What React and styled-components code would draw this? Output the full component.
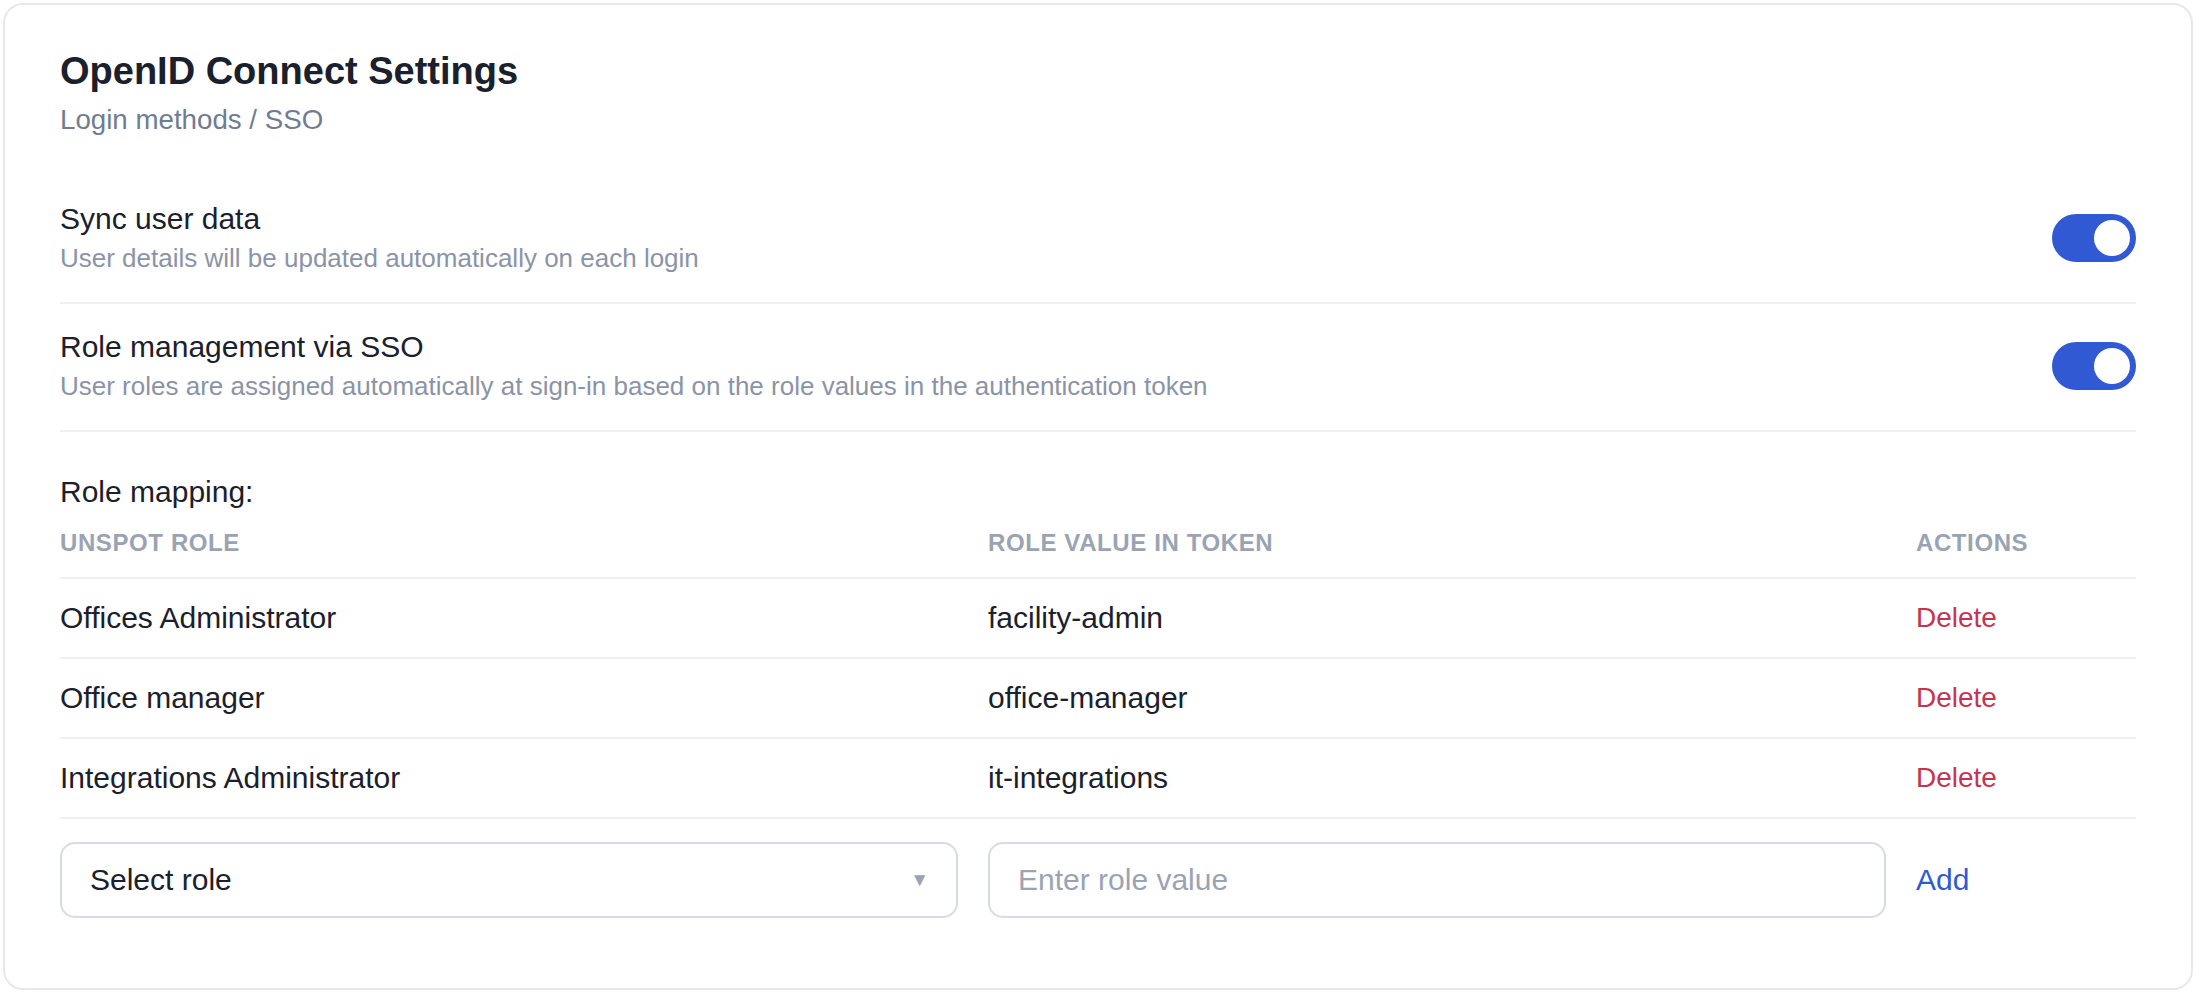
import React, { useState } from 'react';
import styled, { createGlobalStyle } from 'styled-components';

const TextColor = '#1a202c';
const MutedColor = '#6f7c91';
const SoftColor = '#8a94a7';
const HeadColor = '#9aa3b3';
const LineColor = '#eef0f4';
const BorderColor = '#d6dbe4';
const BlueColor = '#3059d3';
const RedColor = '#c8334f';

const GlobalStyle = createGlobalStyle`
  html, body {
    margin: 0;
    padding: 0;
    background: #ffffff;
    font-family: "Liberation Sans", Arial, sans-serif;
    color: ${TextColor};
  }
  * {
    box-sizing: border-box;
  }
`;

const Page = styled.div`
  padding: 3px;
`;

const Card = styled.section`
  border: 2px solid #e5e8ee;
  border-radius: 20px;
  background: #ffffff;
  padding: 44px 55px 70px;
`;

const Title = styled.h1`
  margin: 0;
  font-size: 38px;
  line-height: 44px;
  font-weight: 700;
  color: ${TextColor};
`;

const Subtitle = styled.div`
  margin-top: 11px;
  font-size: 27.7px;
  line-height: 32px;
  color: ${MutedColor};
`;

const Settings = styled.div`
  margin-top: 40px;
`;

const SettingRow = styled.div`
  display: flex;
  align-items: center;
  justify-content: space-between;
  padding: 25px 0 28px;
  border-bottom: 2px solid ${LineColor};
`;

const SettingText = styled.div`
  display: flex;
  flex-direction: column;
  gap: 5px;
`;

const Label = styled.div`
  font-size: 30px;
  line-height: 36px;
  color: ${TextColor};
`;

const Hint = styled.div`
  font-size: 26px;
  line-height: 32px;
  color: ${SoftColor};
`;

const Switch = styled.button`
  position: relative;
  width: 84px;
  height: 48px;
  padding: 0;
  border: none;
  border-radius: 24px;
  cursor: pointer;
  flex-shrink: 0;
  background: ${({ $on }) => ($on ? BlueColor : '#cbd2dc')};

  &::after {
    content: '';
    position: absolute;
    top: 6px;
    left: ${({ $on }) => ($on ? '42px' : '6px')};
    width: 36px;
    height: 36px;
    border-radius: 50%;
    background: #ffffff;
  }
`;

const MappingTitle = styled.div`
  margin-top: 42px;
  font-size: 30px;
  line-height: 36px;
  color: ${TextColor};
`;

const Grid = styled.div`
  display: grid;
  grid-template-columns: 1fr 1fr 220px;
  column-gap: 30px;
  align-items: center;
  border-bottom: 2px solid ${LineColor};
  padding: ${({ $head }) => ($head ? '19px 0 20px' : '21px 0')};
`;

const HeadCell = styled.div`
  font-size: 24px;
  line-height: 28px;
  font-weight: 700;
  letter-spacing: 0.6px;
  text-transform: uppercase;
  color: ${HeadColor};
`;

const Cell = styled.div`
  font-size: 30px;
  line-height: 36px;
  color: ${TextColor};
`;

const LinkButton = styled.button`
  justify-self: start;
  padding: 0;
  border: none;
  background: none;
  cursor: pointer;
  font-family: inherit;
  font-size: ${({ $danger }) => ($danger ? '28px' : '30px')};
  line-height: 36px;
  color: ${({ $danger }) => ($danger ? RedColor : BlueColor)};
`;

const AddRow = styled.div`
  display: grid;
  grid-template-columns: 1fr 1fr 220px;
  column-gap: 30px;
  align-items: center;
  margin-top: 23px;
`;

const SelectBox = styled.div`
  display: flex;
  align-items: center;
  justify-content: space-between;
  height: 76px;
  padding: 0 27px 0 28px;
  border: 2px solid ${BorderColor};
  border-radius: 15px;
  font-size: 30px;
  color: ${TextColor};
  cursor: pointer;
`;

const Caret = styled.span`
  font-size: 19px;
  color: ${HeadColor};
`;

const TextInput = styled.input`
  height: 76px;
  width: 100%;
  padding: 0 28px;
  border: 2px solid ${BorderColor};
  border-radius: 15px;
  font-family: inherit;
  font-size: 30px;
  color: ${TextColor};
  outline: none;

  &::placeholder {
    color: ${HeadColor};
  }
`;

const initialRoles = [
  { role: 'Offices Administrator', value: 'facility-admin' },
  { role: 'Office manager', value: 'office-manager' },
  { role: 'Integrations Administrator', value: 'it-integrations' },
];

export default function App() {
  const [sync, setSync] = useState(true);
  const [roleSso, setRoleSso] = useState(true);
  const [roles, setRoles] = useState(initialRoles);
  const [value, setValue] = useState('');

  return (
    <Page>
      <GlobalStyle />
      <Card>
        <Title>OpenID Connect Settings</Title>
        <Subtitle>Login methods / SSO</Subtitle>

        <Settings>
          <SettingRow>
            <SettingText>
              <Label>Sync user data</Label>
              <Hint>User details will be updated automatically on each login</Hint>
            </SettingText>
            <Switch $on={sync} onClick={() => setSync(!sync)} aria-label="Sync user data" />
          </SettingRow>
          <SettingRow>
            <SettingText>
              <Label>Role management via SSO</Label>
              <Hint>
                User roles are assigned automatically at sign-in based on the role values in the authentication token
              </Hint>
            </SettingText>
            <Switch $on={roleSso} onClick={() => setRoleSso(!roleSso)} aria-label="Role management via SSO" />
          </SettingRow>
        </Settings>

        <MappingTitle>Role mapping:</MappingTitle>
        <Grid $head>
          <HeadCell>Unspot role</HeadCell>
          <HeadCell>Role value in token</HeadCell>
          <HeadCell>Actions</HeadCell>
        </Grid>
        {roles.map((r) => (
          <Grid key={r.value}>
            <Cell>{r.role}</Cell>
            <Cell>{r.value}</Cell>
            <LinkButton $danger onClick={() => setRoles(roles.filter((x) => x !== r))}>
              Delete
            </LinkButton>
          </Grid>
        ))}

        <AddRow>
          <SelectBox>
            <span>Select role</span>
            <Caret>▼</Caret>
          </SelectBox>
          <TextInput
            placeholder="Enter role value"
            value={value}
            onChange={(e) => setValue(e.target.value)}
          />
          <LinkButton>Add</LinkButton>
        </AddRow>
      </Card>
    </Page>
  );
}
